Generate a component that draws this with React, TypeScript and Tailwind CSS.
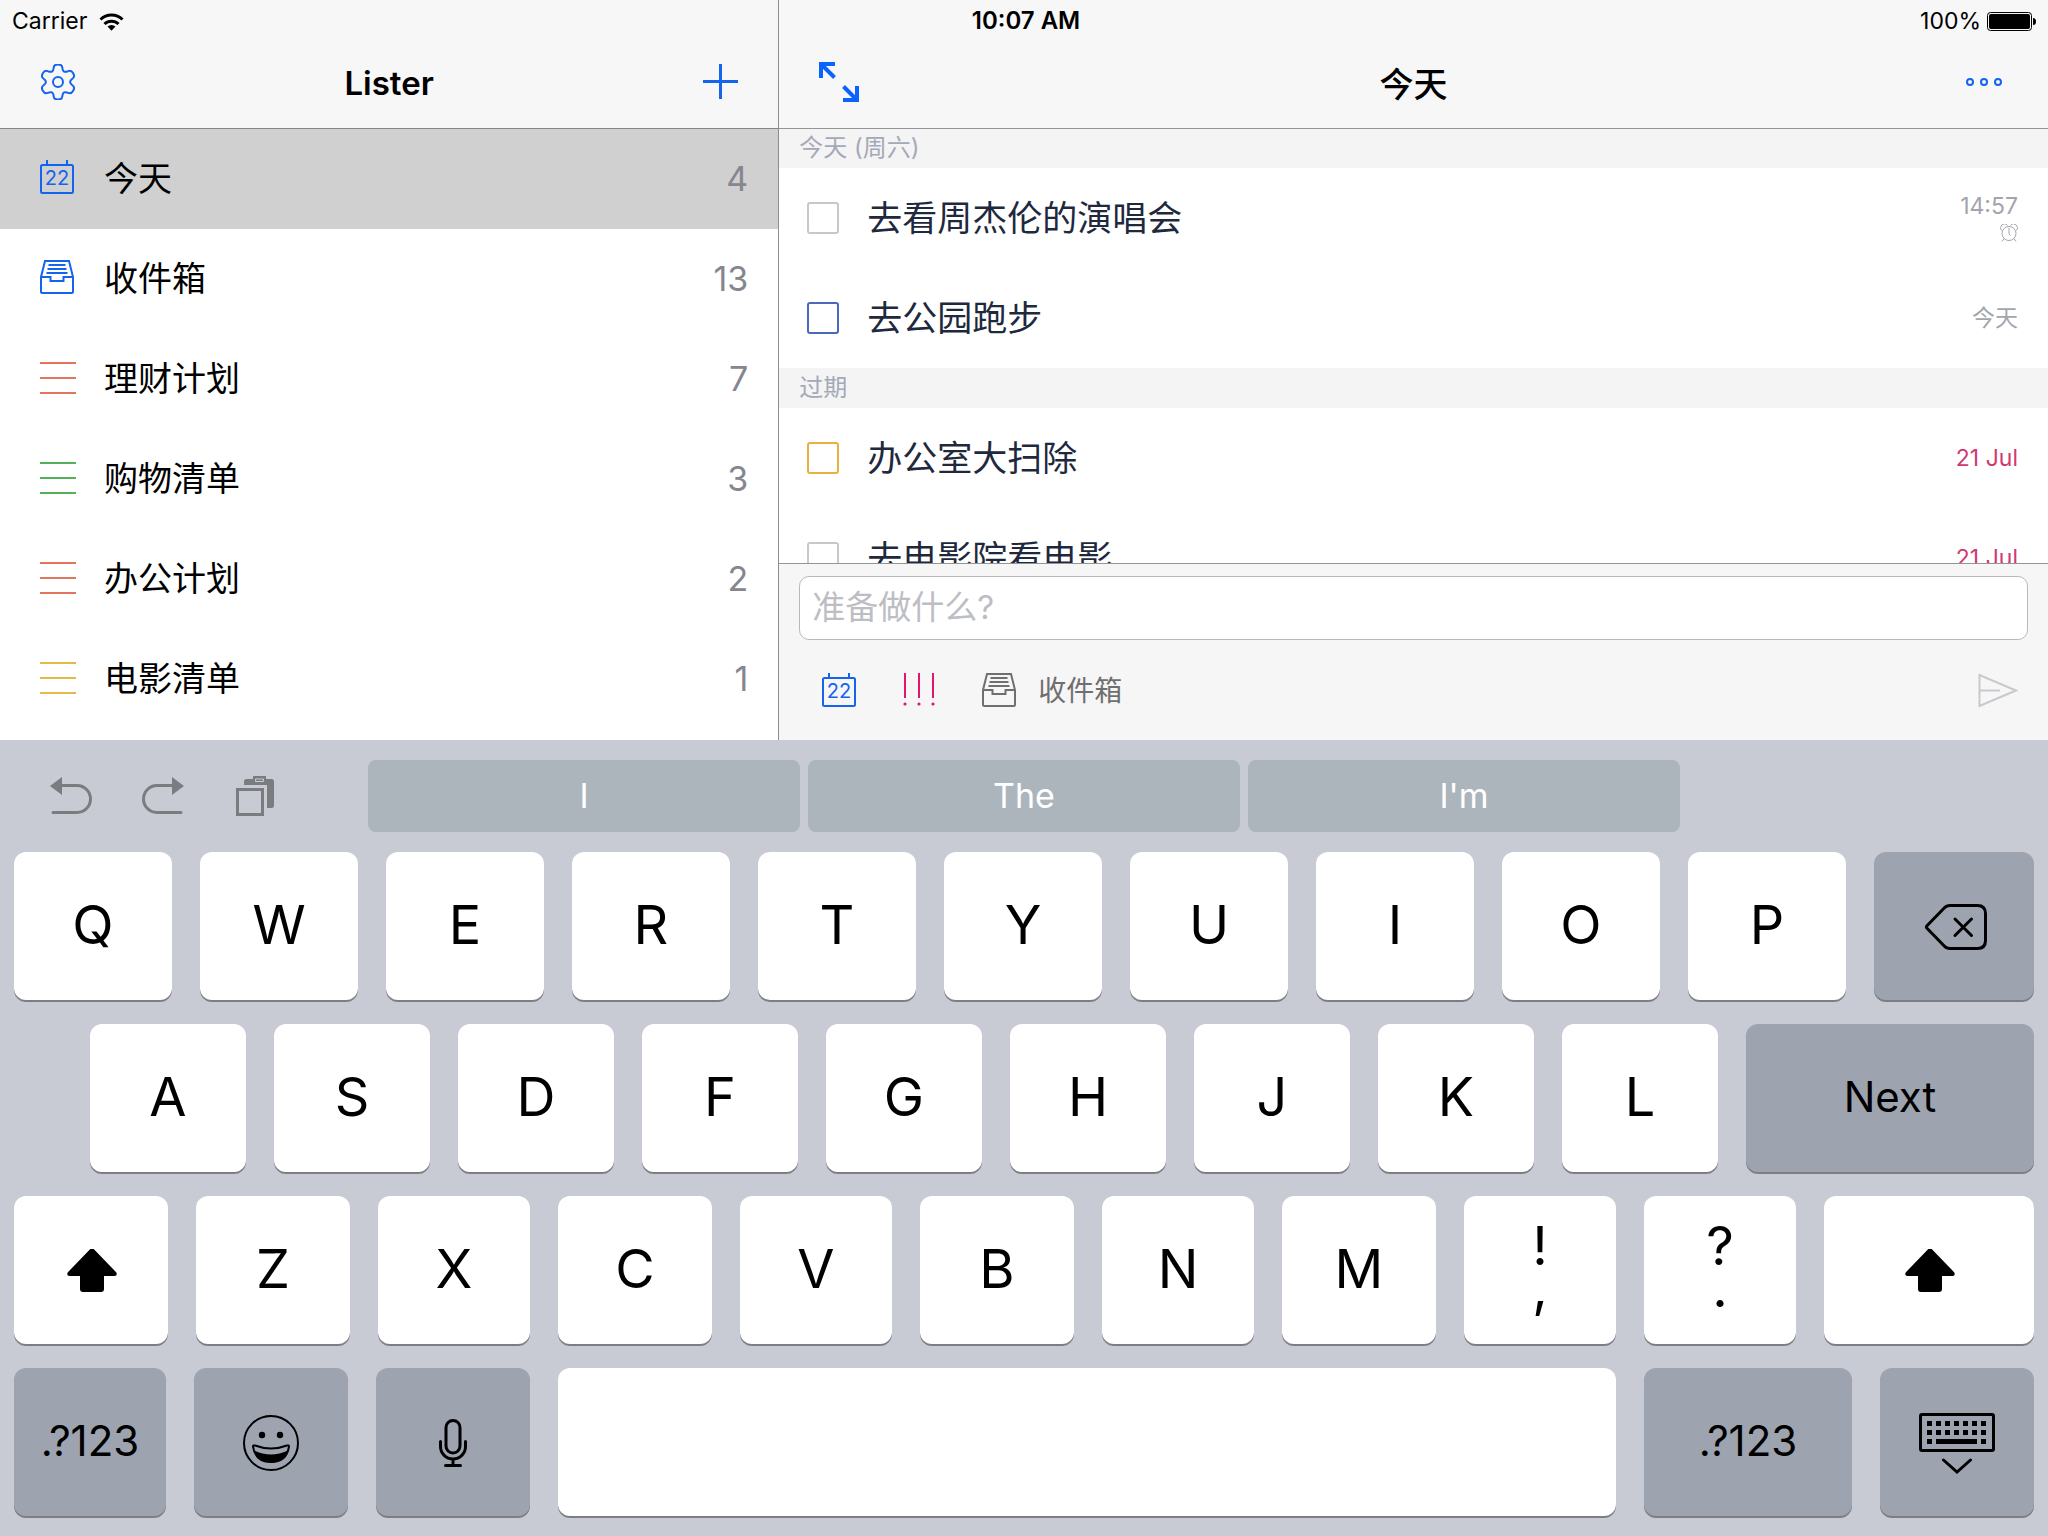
import { useState, type ReactNode } from "react";

type Task = {
  id: string;
  title: string;
  when: string;
  alarm?: boolean;
  late?: boolean;
  box: string;
};

const lists = [
  { name: "今天", count: 4, icon: "calendar", color: "text-[#1464ee]" },
  { name: "收件箱", count: 13, icon: "tray", color: "text-[#1464ee]" },
  { name: "理财计划", count: 7, icon: "lines", color: "text-[#e5745f]" },
  { name: "购物清单", count: 3, icon: "lines", color: "text-[#53b257]" },
  { name: "办公计划", count: 2, icon: "lines", color: "text-[#e5745f]" },
  { name: "电影清单", count: 1, icon: "lines", color: "text-[#e2ba45]" },
];

const sections: { title: string; tasks: Task[] }[] = [
  {
    title: "今天 (周六)",
    tasks: [
      { id: "concert", title: "去看周杰伦的演唱会", when: "14:57", alarm: true, box: "border-[#c8c8cc]" },
      { id: "run", title: "去公园跑步", when: "今天", box: "border-[#4a69bd]" },
    ],
  },
  {
    title: "过期",
    tasks: [
      { id: "office", title: "办公室大扫除", when: "21 Jul", late: true, box: "border-[#e9b040]" },
      { id: "movie", title: "去电影院看电影", when: "21 Jul", late: true, box: "border-[#c8c8cc]" },
    ],
  },
];

function CalendarIcon() {
  return (
    <svg className="size-9 shrink-0" viewBox="0 0 36 36" fill="none" stroke="currentColor" strokeWidth="2">
      <rect x="1" y="5" width="32" height="28" rx="1.5" />
      <path d="M7 0v5M27 0v5" />
      <text x="17" y="25" fontSize="20" textAnchor="middle" fill="currentColor" stroke="none">
        22
      </text>
    </svg>
  );
}

function TrayIcon() {
  return (
    <svg className="size-9 shrink-0" viewBox="0 0 36 36" fill="none" stroke="currentColor" strokeWidth="2">
      <path d="M1 17 5 1h24l4 16v14.500a1.500 1.500 0 0 1-1.500 1.500h-29A1.500 1.500 0 0 1 1 31.500zM1 17h9.500v4h13v-4H33" />
      <path d="M8.500 5h17M7.500 9h19M6.500 13h21" />
    </svg>
  );
}

function LinesIcon() {
  return (
    <svg className="size-9 shrink-0" viewBox="0 0 36 36" stroke="currentColor" strokeWidth="2">
      <path d="M0 3h36M0 18h36M0 33h36" />
    </svg>
  );
}

function ListIcon({ name }: { name: string }) {
  if (name === "calendar") return <CalendarIcon />;
  if (name === "tray") return <TrayIcon />;
  return <LinesIcon />;
}

// Six rounded teeth, each corner softened by a quadratic through the midpoints.
function gearPath() {
  const corners: [number, number][] = [];
  for (let tooth = 0; tooth < 6; tooth++) {
    for (const [offset, radius] of [[-22, 12.2], [-13, 18], [13, 18], [22, 12.2]]) {
      const angle = ((tooth * 60 - 90 + offset) * Math.PI) / 180;
      corners.push([18 + radius * Math.cos(angle), 18 + radius * Math.sin(angle)]);
    }
  }
  const mid = (i: number) => {
    const a = corners[i % 24];
    const b = corners[(i + 1) % 24];
    return `${(a[0] + b[0]) / 2} ${(a[1] + b[1]) / 2}`;
  };
  return `M${mid(0)}${corners
    .map((_, i) => {
      const c = corners[(i + 1) % 24];
      return `Q${c[0]} ${c[1]} ${mid(i + 1)}`;
    })
    .join("")}z`;
}

function StatusBar() {
  return (
    <div className="absolute inset-x-0 top-0 z-20 grid h-[42px] grid-cols-[1fr_auto_1fr] items-center px-3 text-[23px] leading-10">
      <div className="flex items-center gap-3">
        <span>Carrier</span>
        <svg className="h-[19px] w-[25px]" viewBox="0 0 25 19" fill="none" stroke="#000" strokeWidth="3">
          <path d="M1.500 7.500a15.600 15.600 0 0 1 22 0M5.500 12a10 10 0 0 1 14 0" />
          <path d="M8.500 14.600a5.800 5.800 0 0 1 8 0l-4 4.200z" fill="#000" stroke="none" />
        </svg>
      </div>
      <span className="pl-1 text-[24px] font-semibold">10:07 AM</span>
      <div className="flex items-center justify-end gap-1.5">
        <span>100%</span>
        <svg className="h-[19px] w-[49px]" viewBox="0 0 49 19">
          <rect x=".5" y=".5" width="44" height="18" rx="3" fill="none" stroke="#000" />
          <rect x="2" y="2" width="41" height="15" rx="2" />
          <path d="M46 6q3 0 3 3.500t-3 3.500z" />
        </svg>
      </div>
    </div>
  );
}

function Sidebar({ current, onSelect }: { current: string; onSelect: (name: string) => void }) {
  return (
    <aside className="w-[38%] shrink-0 bg-white">
      <header className="grid h-[129px] grid-cols-[1fr_auto_1fr] items-center border-b border-[#858585] bg-[#f7f7f7] px-10 pt-10">
        <button type="button" aria-label="Settings" className="justify-self-start pb-1 text-[#1464ee]">
          <svg className="size-9" viewBox="0 0 36 36" fill="none" stroke="currentColor" strokeWidth="2">
            <path d={gearPath()} />
            <circle cx="18" cy="18" r="5" />
          </svg>
        </button>
        <h1 className="text-[33px] font-semibold">Lister</h1>
        <button type="button" aria-label="Add list" className="justify-self-end pb-1 text-[#1464ee]">
          <svg className="size-9" viewBox="0 0 36 36" stroke="currentColor" strokeWidth="3">
            <path d="M18.500 0v35M1 17.500h35" />
          </svg>
        </button>
      </header>
      <ul>
        {lists.map((list) => (
          <li key={list.name}>
            <button
              type="button"
              onClick={() => onSelect(list.name)}
              className={`flex h-[100px] w-full items-center gap-7 pb-0.5 pl-10 pr-[30px] text-left text-[34px] ${
                current === list.name ? "bg-[#d0d0d0]" : "bg-white"
              }`}
            >
              <span className={list.color}>
                <ListIcon name={list.icon} />
              </span>
              <span className="flex-1">{list.name}</span>
              <span className="text-[#85868e]">{list.count}</span>
            </button>
          </li>
        ))}
      </ul>
    </aside>
  );
}

function TaskRow({ task }: { task: Task }) {
  return (
    <li className="flex h-[100px] items-center gap-7 bg-white pl-7 pr-[30px]">
      <input
        id={task.id}
        type="checkbox"
        className={`size-8 shrink-0 appearance-none rounded-[3px] border-2 bg-white checked:bg-slate-300 ${task.box}`}
      />
      <label htmlFor={task.id} className="flex-1 text-[35px] text-[#1e293d]">
        {task.title}
      </label>
      <div
        className={`flex flex-col items-end gap-1.5 text-[23px] leading-6 ${
          task.late ? "text-[#cf3a74]" : "text-[#a3a5ad]"
        }`}
      >
        <span>{task.when}</span>
        {task.alarm ? (
          <svg className="h-[18px] w-[18px]" viewBox="0 0 18 18" fill="none" stroke="currentColor">
            <circle cx="9" cy="9.500" r="7" />
            <path d="M9 4v6l1.500 1.500M4 14.500 2 17.500M14 14.500l2 3M1.500 6.500a3.600 3.600 0 0 1 6-5.200M16.500 6.500a3.600 3.600 0 0 0-6-5.200" />
          </svg>
        ) : null}
      </div>
    </li>
  );
}

function TaskPane() {
  const [draft, setDraft] = useState("");

  return (
    <main className="flex min-w-0 flex-1 flex-col border-l border-[#8e8e8e] bg-white">
      <header className="relative z-10 grid h-[129px] shrink-0 grid-cols-[1fr_auto_1fr] items-center border-b border-[#959595] bg-[#f7f7f7] px-10 pt-10">
        <button type="button" aria-label="Full screen" className="justify-self-start pb-1 text-[#0b62ff]">
          <svg className="size-10" viewBox="0 0 40 40" fill="none" stroke="currentColor" strokeWidth="4">
            <path d="M16 2H2v14M2 2l13.500 13.500M24 38h14V24M38 38 24.500 24.500" />
          </svg>
        </button>
        <h2 className="text-[34px] font-medium">今天</h2>
        <button type="button" aria-label="More" className="justify-self-end pb-1 text-[#1464ee]">
          <svg className="h-10 w-[42px]" viewBox="0 0 42 40" fill="none" stroke="currentColor" strokeWidth="2">
            <circle cx="4" cy="20" r="3" />
            <circle cx="18" cy="20" r="3" />
            <circle cx="32" cy="20" r="3" />
          </svg>
        </button>
      </header>

      <div className="-mt-px min-h-0 flex-1 overflow-hidden">
        {sections.map((section) => (
          <section key={section.title}>
            <h3 className="h-10 bg-[#f4f4f4] pl-5 text-[24px] leading-10 text-[#a4a9b8]">{section.title}</h3>
            <ul>
              {section.tasks.map((task) => (
                <TaskRow key={task.id} task={task} />
              ))}
            </ul>
          </section>
        ))}
      </div>

      <form
        className="shrink-0 border-t border-[#959595] bg-[#f6f6f7] px-5 pt-3"
        onSubmit={(event) => event.preventDefault()}
      >
        <input
          type="text"
          aria-label="准备做什么?"
          placeholder="准备做什么?"
          value={draft}
          onChange={(event) => setDraft(event.target.value)}
          className="block h-16 w-full rounded-[10px] border border-[#b9b9bb] bg-white px-3 pb-0.5 text-[33px] outline-none placeholder:text-[#bdbdc4]"
        />
        <div className="flex h-[100px] items-center gap-11 pl-[23px] pr-2.5 pt-0.5">
          <button type="button" aria-label="Due date" className="text-[#1464ee]">
            <CalendarIcon />
          </button>
          <button type="button" aria-label="Priority" className="text-[#e0176c]">
            <svg className="size-9" viewBox="0 0 36 36" stroke="currentColor" strokeWidth="2" fill="currentColor">
              <path d="M3 0v25M17 0v25M31 0v25" />
              <g stroke="none">
                <circle cx="3" cy="31" r="1.600" />
                <circle cx="17" cy="31" r="1.600" />
                <circle cx="31" cy="31" r="1.600" />
              </g>
            </svg>
          </button>
          <button type="button" className="flex items-center gap-5 text-[28px] text-[#6f6f6f]">
            <TrayIcon />
            收件箱
          </button>
          <button type="submit" aria-label="Send" className="ml-auto text-[#c9c9cd]">
            <svg className="h-9 w-10" viewBox="0 0 40 36" fill="none" stroke="currentColor" strokeWidth="2">
              <path d="M1.500 2v31L38 17.500zM1.500 17.500H22" />
            </svg>
          </button>
        </div>
      </form>
    </main>
  );
}

function Key({ children, label, size, dark }: { children?: ReactNode; label?: string; size: string; dark?: boolean }) {
  return (
    <button
      type="button"
      aria-label={label}
      className={`flex h-[148px] min-w-0 basis-0 items-center justify-center rounded-xl text-black shadow-[0_2px_0_#7d7e84] ${size} ${
        dark ? "bg-[#9da3af] text-[42px]" : "bg-white text-[54px]"
      } ${typeof children === "string" ? "pb-[3px]" : "pt-0.5"}`}
    >
      {children}
    </button>
  );
}

function ShiftIcon() {
  return (
    <svg className="h-11 w-[52px]" viewBox="-2 1 52 44">
      <path d="M23.500.800q1.500-1.500 3 0l22.800 23.600q1.500 3.600-1.800 3.600H37v13q0 3-3 3H16q-3 0-3-3V28H2.500Q-.800 28 .700 24.400z" />
    </svg>
  );
}

function Suggestions() {
  return (
    <div className="grid grid-cols-[23fr_82fr_23fr] items-center">
      <div className="flex items-center gap-[50px] pl-[50px] text-[#7b7c80]">
        <button type="button" aria-label="Undo">
          <svg className="h-[38px] w-[42px]" viewBox="0 0 42 38" fill="none" stroke="currentColor" strokeWidth="3">
            <path d="M10 8.500h17a13.500 13.500 0 0 1 0 27H3" strokeLinecap="round" />
            <path d="M0 9 12 0v18z" fill="currentColor" stroke="none" />
          </svg>
        </button>
        <button type="button" aria-label="Redo">
          <svg className="h-[38px] w-[42px]" viewBox="0 0 42 38" fill="none" stroke="currentColor" strokeWidth="3">
            <path d="M32 8.500H15a13.500 13.500 0 0 0 0 27h24" strokeLinecap="round" />
            <path d="M42 9 30 0v18z" fill="currentColor" stroke="none" />
          </svg>
        </button>
        <button type="button" aria-label="Paste">
          <svg className="h-10 w-[42px]" viewBox="-2 0 42 40" fill="currentColor">
            <path d="M0 12h28v28H0zM3 15v22h22V15z" fillRule="evenodd" />
            <path d="M8 9V5.500Q8 3 10.500 3H17V0h13v3h5.500Q38 3 38 5.500v24q0 2.500-2.500 2.500H31V9z" />
            <path d="M19.500 3h8v2.500h-8z" fill="none" stroke="#c8cad4" />
          </svg>
        </button>
      </div>
      <div className="grid grid-cols-3 gap-2 text-[34px] text-white">
        {["I", "The", "I'm"].map((word) => (
          <button key={word} type="button" className="h-[72px] rounded-lg bg-[#adb5bc] pb-0.5">
            {word}
          </button>
        ))}
      </div>
    </div>
  );
}

function Keyboard() {
  return (
    <div className="flex shrink-0 flex-col gap-5 bg-[#c8cad4] py-5">
      <Suggestions />
      <div className="flex flex-col gap-6 px-3.5">
        <div className="flex gap-7">
          {[..."QWERTYUIOP"].map((letter) => (
            <Key key={letter} size="grow-[158]">
              {letter}
            </Key>
          ))}
          <Key size="grow-[160]" label="Delete" dark>
            <svg className="h-[46px] w-[66px]" viewBox="-4 0 66 46" fill="none" stroke="#000" strokeWidth="3">
              <path d="M2.200 24.500q-1.500-1.500 0-3L19 4.200Q21.500 1.500 25 1.500h27.500q8 0 8 8v27q0 8-8 8H25q-3.500 0-6-2.700z" />
              <path d="m30 15 16.500 16.500M46.500 15 30 31.500" strokeLinecap="round" />
            </svg>
          </Key>
        </div>

        <div className="flex gap-7 pl-[76px]">
          {[..."ASDFGHJKL"].map((letter) => (
            <Key key={letter} size="grow-[156]">
              {letter}
            </Key>
          ))}
          <Key size="grow-[288]" dark>
            Next
          </Key>
        </div>

        <div className="flex gap-7">
          <Key size="grow-[154]" label="Shift">
            <ShiftIcon />
          </Key>
          {[..."ZXCVBNM"].map((letter, i) => (
            <Key key={letter} size={i % 2 ? "grow-[152]" : "grow-[154]"}>
              {letter}
            </Key>
          ))}
          {["!,", "?."].map((pair) => (
            <Key key={pair} size="grow-[152]">
              <span className="flex flex-col pb-2 leading-[42px]">
                <span>{pair[0]}</span>
                <span>{pair[1]}</span>
              </span>
            </Key>
          ))}
          <Key size="grow-[210]" label="Right shift">
            <ShiftIcon />
          </Key>
        </div>

        <div className="flex gap-7">
          <Key size="grow-[152]" dark>
            .?123
          </Key>
          <Key size="grow-[154]" label="Emoji" dark>
            <svg className="size-14" viewBox="0 0 56 56" fill="none" stroke="#000" strokeWidth="2">
              <circle cx="28" cy="28" r="27" />
              <circle cx="19" cy="20" r="3.200" fill="#000" stroke="none" />
              <circle cx="37" cy="20" r="3.200" fill="#000" stroke="none" />
              <path d="M10 31.500q0-1.500 2-1 16 6 32 0 2-.500 2 1Q43.500 47 28 47T10 31.500z" />
              <path d="M11 35.500q17 8 34 0Q41 47.500 28 47.500T11 35.500z" fill="#000" stroke="none" />
            </svg>
          </Key>
          <Key size="grow-[154]" label="Dictate" dark>
            <svg className="h-12 w-7" viewBox="0 0 28 48" fill="none" stroke="#000" strokeWidth="3" strokeLinecap="round">
              <rect x="7" y="1.500" width="14" height="32.500" rx="7" />
              <path d="M1.500 22.500v5a12.500 12.500 0 0 0 25 0v-5M14 40v6M6.500 46.500h15" />
            </svg>
          </Key>
          <Key size="grow-[1058]" label="Space" />
          <Key size="grow-[208]" dark>
            .?123
          </Key>
          <Key size="grow-[154]" label="Hide keyboard" dark>
            <svg className="h-[62px] w-[76px]" viewBox="0 -1 76 62">
              <rect x="1.500" y="1.500" width="73" height="36" rx="1.500" fill="none" stroke="#000" strokeWidth="3" />
              <path
                d="M8 10.500h59M8 19.500h59"
                stroke="#000"
                strokeWidth="5"
                strokeDasharray="5 4"
              />
              <path d="M8 28.500h5M17 28.500h41M62 28.500h5" stroke="#000" strokeWidth="5" />
              <path d="m24.500 47 13.500 12 13.500-12" fill="none" stroke="#000" strokeWidth="3" strokeLinecap="round" />
            </svg>
          </Key>
        </div>
      </div>
    </div>
  );
}

export default function App() {
  const [current, setCurrent] = useState("今天");

  return (
    <div className="relative flex h-screen flex-col overflow-hidden bg-white font-['Inter','Noto_Sans_CJK_SC',sans-serif] text-black">
      <StatusBar />
      <div className="flex min-h-0 flex-1">
        <Sidebar current={current} onSelect={setCurrent} />
        <TaskPane />
      </div>
      <Keyboard />
    </div>
  );
}
